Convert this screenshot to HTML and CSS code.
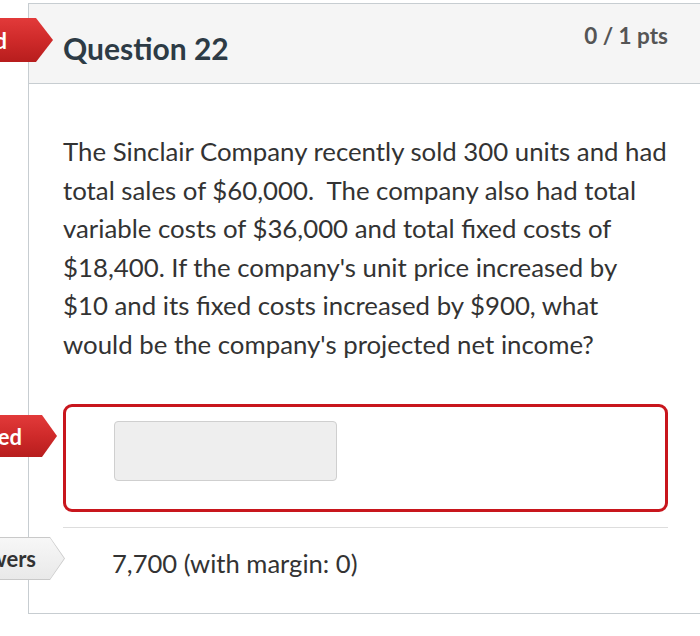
FILE: index.html
```html
<!DOCTYPE html>
<html>
<head>
<meta charset="utf-8">
<link rel="stylesheet" href="styles.css">
</head>
<body>
<div class="page">
  <div class="card">
    <div class="card-header">
      <h2 class="title">Question 22</h2>
      <div class="pts">0 / 1 pts</div>
    </div>
    <div class="card-body">
      <p class="question">The Sinclair Company recently sold 300 units and had<br>total sales of $60,000.&nbsp; The company also had total<br>variable costs of $36,000 and total fixed costs of<br>$18,400. If the company's unit price increased by<br>$10 and its fixed costs increased by $900, what<br>would be the company's projected net income?</p>
      <div class="answer-box">
        <div class="answer-input"></div>
      </div>
      <div class="divider"></div>
      <div class="correct">7,700 (with margin: 0)</div>
    </div>
  </div>
  <div class="badge badge-red badge-top"><span>Unanswered</span></div>
  <div class="badge badge-red badge-mid"><span>You Answered</span></div>
  <div class="badge badge-grey badge-bot"><div class="badge-inner"><span>Correct Answers</span></div></div>
</div>
</body>
</html>
```

FILE: styles.css
```css
html, body {
  margin: 0;
  padding: 0;
  background: #ffffff;
  overflow: hidden;
}
body {
  font-family: Lato, "Liberation Sans", sans-serif;
  width: 700px;
  height: 636px;
}
.page {
  position: relative;
  width: 700px;
  height: 636px;
  padding-top: 3px;
  box-sizing: border-box;
}
.card {
  margin-left: 28px;
  width: 690px;
  border: 1px solid #c7cdd1;
  box-sizing: border-box;
  height: 611px;
}
.card-header {
  height: 80px;
  background: #f5f5f5;
  border-bottom: 1px solid #c7cdd1;
  display: flex;
  justify-content: space-between;
  align-items: flex-start;
  padding: 0 49px 0 34px;
  box-sizing: border-box;
}
.title {
  margin: 26px 0 0 0;
  font-size: 30px;
  font-weight: 700;
  color: #2d3b45;
  line-height: 36px;
}
.pts {
  margin-top: 17px;
  font-size: 22.5px;
  font-weight: 700;
  color: #555555;
  line-height: 30px;
}
.card-body {
  padding: 48px 21px 0 34px;
}
.question {
  margin: 0;
  font-size: 25.8px;
  line-height: 38.5px;
  color: #333333;
  white-space: nowrap;
}
.answer-box {
  margin-top: 41px;
  width: 605px;
  height: 108px;
  box-sizing: border-box;
  border: 3px solid #c8161d;
  border-radius: 9px;
  padding: 14px 0 0 48px;
}
.answer-input {
  width: 223px;
  height: 60px;
  box-sizing: border-box;
  background: #eeeeee;
  border: 1px solid #cfcfcf;
  border-radius: 4px;
}
.divider {
  margin-top: 15px;
  width: 605px;
  height: 1px;
  background: #dddddd;
}
.correct {
  margin-top: 19px;
  padding-left: 49px;
  font-size: 25.6px;
  line-height: 32px;
  color: #333333;
}
.badge {
  position: absolute;
  width: 200px;
  display: flex;
  align-items: center;
  justify-content: flex-end;
  box-sizing: border-box;
  font-weight: 700;
  font-size: 22px;
  white-space: nowrap;
}
.badge-red {
  background: linear-gradient(to bottom, #e23a3a 0%, #cf2a2a 50%, #b71d1d 100%);
  color: #ffffff;
}
.badge-top {
  top: 18px;
  left: -147px;
  height: 44px;
  padding-right: 46px;
  clip-path: polygon(0 0, 183px 0, 200px 50%, 183px 100%, 0 100%);
}
.badge-mid {
  top: 415px;
  left: -143px;
  height: 42px;
  padding-right: 35px;
  clip-path: polygon(0 0, 185px 0, 200px 50%, 185px 100%, 0 100%);
}
.badge-grey {
  top: 537px;
  left: -135px;
  height: 43px;
  background: #c9c9c9;
  clip-path: polygon(0 0, 185px 0, 200px 50%, 185px 100%, 0 100%);
  display: block;
}
.badge-inner {
  position: absolute;
  inset: 1px;
  background: linear-gradient(to bottom, #f7f7f7, #e9e9e9);
  clip-path: polygon(0 0, 184px 0, 198px 50%, 184px 100%, 0 100%);
  display: flex;
  align-items: center;
  justify-content: flex-end;
  padding-right: 28px;
  color: #333333;
  font-size: 22px;
  white-space: nowrap;
}
```
